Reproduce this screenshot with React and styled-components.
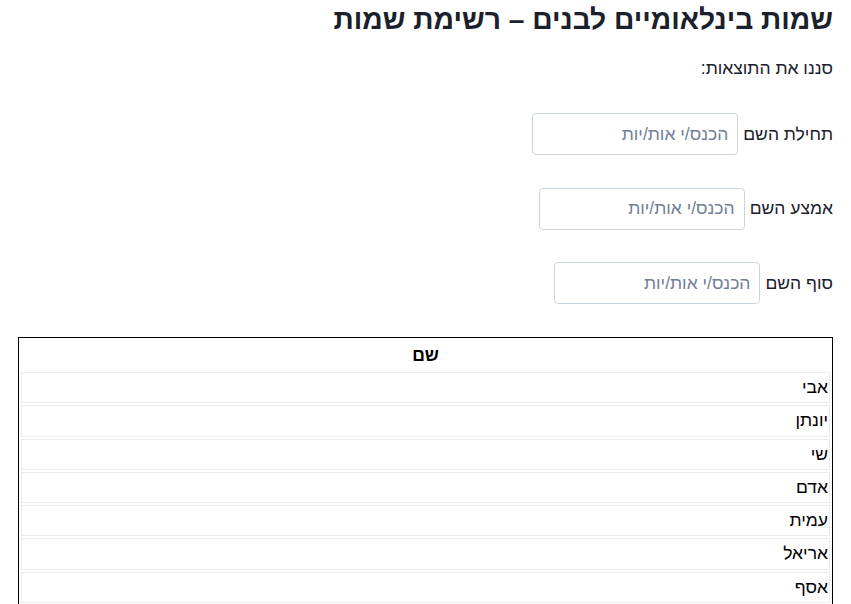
import React, { useState } from "react";
import styled, { createGlobalStyle } from "styled-components";

const NAMES = ["אבי", "יונתן", "שי", "אדם", "עמית", "אריאל", "אסף", "דניאל", "נועם", "איתי"];

const FILTERS = [
  { key: "start", label: "תחילת השם" },
  { key: "middle", label: "אמצע השם" },
  { key: "end", label: "סוף השם" },
];

export default function App() {
  const [filters, setFilters] = useState({ start: "", middle: "", end: "" });

  const shown = NAMES.filter(
    (n) =>
      n.startsWith(filters.start) &&
      n.includes(filters.middle) &&
      n.endsWith(filters.end)
  );

  return (
    <>
      <GlobalStyle />
      <Page>
        <Title>שמות בינלאומיים לבנים – רשימת שמות</Title>
        <Intro>סננו את התוצאות:</Intro>
        <Filters>
          {FILTERS.map((f) => (
            <FilterRow key={f.key}>
              <label htmlFor={f.key}>{f.label}</label>
              <Input
                id={f.key}
                placeholder="הכנס/י אות/יות"
                value={filters[f.key]}
                onChange={(e) =>
                  setFilters({ ...filters, [f.key]: e.target.value })
                }
              />
            </FilterRow>
          ))}
        </Filters>
        <NamesTable>
          <thead>
            <tr>
              <th>שם</th>
            </tr>
          </thead>
          <tbody>
            {shown.map((n) => (
              <tr key={n}>
                <td>{n}</td>
              </tr>
            ))}
          </tbody>
        </NamesTable>
      </Page>
    </>
  );
}

const GlobalStyle = createGlobalStyle`
  body {
    margin: 0;
    background: #fff;
    font-family: "Liberation Sans", Arial, sans-serif;
  }
`;

const Page = styled.div`
  direction: rtl;
  padding: 0 18px;
  color: #1a202c;
`;

const Title = styled.h1`
  margin: 0;
  font-size: 28.2px;
  line-height: 38px;
  font-weight: 700;
  color: #1a202c;
`;

const Intro = styled.p`
  margin: 18px 0 0;
  font-size: 17.5px;
  line-height: 24px;
  color: #1a202c;
`;

const Filters = styled.div`
  display: flex;
  flex-direction: column;
  gap: 32.5px;
  margin-top: 33px;
`;

const FilterRow = styled.div`
  display: flex;
  align-items: center;
  gap: 5px;
  font-size: 17.5px;
  color: #1a202c;
`;

const Input = styled.input`
  box-sizing: border-box;
  width: 206px;
  height: 42px;
  padding: 0 9px;
  border: 1px solid #cbd5e0;
  border-radius: 4px;
  font: inherit;
  font-size: 17.5px;
  color: #1a202c;
  direction: rtl;
  outline: none;

  &::placeholder {
    color: #718096;
  }
`;

const NamesTable = styled.table`
  width: 100%;
  margin-top: 33px;
  border: 1px solid #000;
  border-spacing: 2px;
  font-size: 17.5px;
  color: #000;

  th {
    padding: 1px;
    line-height: 28px;
    font-weight: 700;
    text-align: center;
  }

  td {
    padding: 1px;
    line-height: 27.3px;
    border: 1px solid #ececec;
    text-align: right;
  }
`;
